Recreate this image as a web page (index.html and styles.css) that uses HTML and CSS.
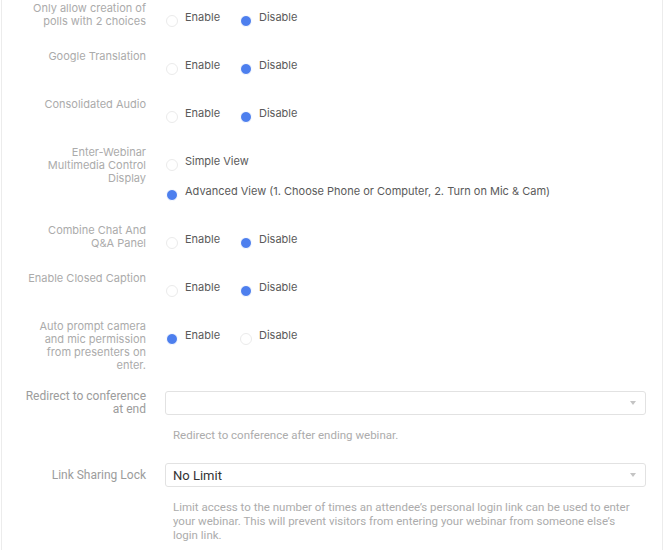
FILE: index.html
```html
<!DOCTYPE html>
<html lang="en">
<head>
<meta charset="UTF-8">
<meta name="viewport" content="width=device-width, initial-scale=1.0">
<title>Webinar Settings</title>
<link rel="stylesheet" href="styles.css">
</head>
<body>

<div class="panel">

    <div class="row">
        <div class="label">Only allow creation of polls with 2 choices</div>
        <div class="options">
            <label class="opt"><span class="radio"></span>Enable</label>
            <label class="opt"><span class="radio on"></span>Disable</label>
        </div>
    </div>

    <div class="row">
        <div class="label">Google Translation</div>
        <div class="options">
            <label class="opt"><span class="radio"></span>Enable</label>
            <label class="opt"><span class="radio on"></span>Disable</label>
        </div>
    </div>

    <div class="row">
        <div class="label">Consolidated Audio</div>
        <div class="options">
            <label class="opt"><span class="radio"></span>Enable</label>
            <label class="opt"><span class="radio on"></span>Disable</label>
        </div>
    </div>

    <div class="row">
        <div class="label">Enter-Webinar Multimedia Control Display</div>
        <div class="options stack">
            <label class="opt"><span class="radio"></span>Simple View</label>
            <label class="opt"><span class="radio on"></span>Advanced View (1. Choose Phone or Computer, 2. Turn on Mic &amp; Cam)</label>
        </div>
    </div>

    <div class="row">
        <div class="label">Combine Chat And Q&amp;A Panel</div>
        <div class="options">
            <label class="opt"><span class="radio"></span>Enable</label>
            <label class="opt"><span class="radio on"></span>Disable</label>
        </div>
    </div>

    <div class="row">
        <div class="label">Enable Closed Caption</div>
        <div class="options">
            <label class="opt"><span class="radio"></span>Enable</label>
            <label class="opt"><span class="radio on"></span>Disable</label>
        </div>
    </div>

    <div class="row">
        <div class="label">Auto prompt camera and mic permission from presenters on enter.</div>
        <div class="options">
            <label class="opt"><span class="radio on"></span>Enable</label>
            <label class="opt"><span class="radio"></span>Disable</label>
        </div>
    </div>

    <div class="row field">
        <div class="label">Redirect to conference at end</div>
        <div class="control">
            <div class="select"><span class="value"></span><span class="caret"></span></div>
            <p class="help">Redirect to conference after ending webinar.</p>
        </div>
    </div>

    <div class="row field">
        <div class="label">Link Sharing Lock</div>
        <div class="control">
            <div class="select"><span class="value">No Limit</span><span class="caret"></span></div>
            <p class="help">Limit access to the number of times an attendee’s personal login link can be used to enter your webinar. This will prevent visitors from entering your webinar from someone else’s login link.</p>
        </div>
    </div>

</div>

</body>
</html>
```

FILE: styles.css
```css
body {
    margin: 0;
    background-color: #fff;
    font-family: Inter, "Noto Sans", sans-serif;
}
.panel {
    margin-left: 1px;
    width: 662px;
    min-height: 550px;
    border-left: 1px solid #ececec;
    border-right: 1px solid #ececec;
    padding-top: 2px;
    box-sizing: border-box;
}
.row {
    display: flex;
    margin-bottom: 18px;
}
.label {
    width: 122px;
    margin-left: 22px;
    flex-shrink: 0;
    text-align: right;
    font-size: 11px;
    line-height: 13px;
    color: #ababab;
}
.options {
    display: flex;
    margin-left: 20px;
    padding-top: 7px;
    padding-bottom: 5px;
}
.options.stack {
    flex-direction: column;
    gap: 12px;
}
.opt {
    display: flex;
    gap: 7px;
    min-width: 55px;
    margin-right: 19px;
    font-size: 11px;
    line-height: 16px;
    color: #5a5a5a;
}
.radio {
    width: 12px;
    height: 12px;
    margin-top: 6px;
    border: 1px solid #ebebeb;
    border-radius: 50%;
    box-sizing: border-box;
    background-color: #fff;
    flex-shrink: 0;
}
.radio.on {
    background-color: #4d7fee;
    border: 1.5px solid #fff;
}

/* select rows */
.field {
    align-items: flex-start;
    font-family: Roboto, "Liberation Sans", sans-serif;
    margin-bottom: 20px;
}
.field .label {
    font-size: 12px;
    min-height: 26px;
    display: flex;
    align-items: center;
    justify-content: flex-end;
    color: #9c9c9c;
}
.control {
    margin-left: 19px;
    width: 481px;
}
.select {
    display: flex;
    align-items: center;
    height: 24px;
    margin-top: 1px;
    padding: 0 7px;
    border: 1px solid #e2e2e2;
    border-radius: 3px;
    box-sizing: border-box;
}
.value {
    flex: 1;
    font-size: 13px;
    color: #333;
}
.caret {
    width: 0;
    height: 0;
    border-left: 3px solid transparent;
    border-right: 3px solid transparent;
    border-top: 4px solid #c4c4c4;
    margin-right: 2px;
}
.help {
    margin: 13px 0 0 0;
    padding: 0 12px 0 8px;
    font-size: 11.5px;
    line-height: 14px;
    color: #acacac;
}
```
